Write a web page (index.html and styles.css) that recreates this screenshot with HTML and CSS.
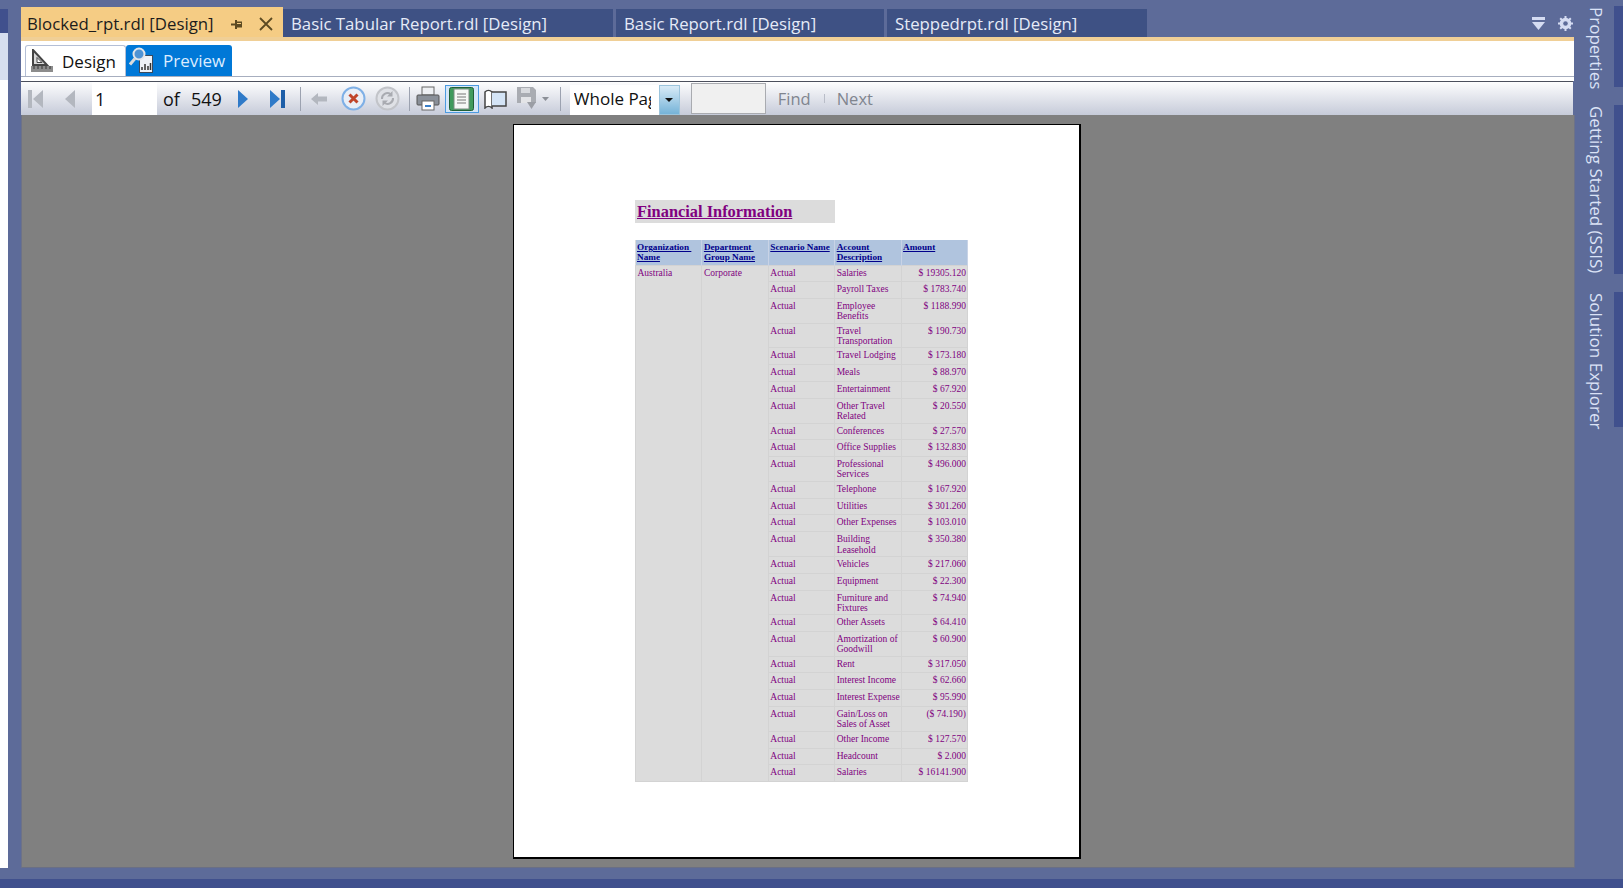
FILE: index.html
```html
<!DOCTYPE html>
<html lang="en">
<head>
    <meta charset="UTF-8">
    <title>Blocked_rpt.rdl [Design]</title>
    <link rel="stylesheet" href="styles.css">
</head>
<body>
    <div class="shell">
        <!-- Left edge of the neighbouring tool window -->
        <div class="left-strip">
            <div class="strip-head"></div>
            <div class="strip-pale"></div>
            <div class="strip-body"></div>
        </div>

        <div class="doc">
            <!-- Document tabs -->
            <div class="tabs">
                <div class="tab tab-active">
                    <span>Blocked_rpt.rdl [Design]</span>
                    <svg class="tab-pin" width="13" height="11" viewBox="0 0 13 11"><path d="M0 4.500h4v2H0z" fill="#5c4a22"/><path d="M4 1h2v1.500h5v6H6V10H4z" fill="#5c4a22"/><path d="M6 4h4v1H6z" fill="#f5cc84"/></svg>
                    <svg class="tab-close" width="14" height="14" viewBox="0 0 14 14"><path d="M1 1l12 12M13 1L1 13" fill="none" stroke="#5c4a22" stroke-width="1.800"/></svg>
                </div>
                <div class="tab tab-b">Basic Tabular Report.rdl [Design]</div>
                <div class="tab tab-c">Basic Report.rdl [Design]</div>
                <div class="tab tab-d">Steppedrpt.rdl [Design]</div>
                <div class="tab-tools">
                    <svg width="13" height="13" viewBox="0 0 13 13"><path d="M0 0h13v3H0zM0 5h13l-6.500 8z" fill="#d5dcf2"/></svg>
                    <svg width="15" height="15" viewBox="0 0 15 15"><circle cx="7.500" cy="7.500" r="4.300" fill="none" stroke="#d5dcf2" stroke-width="3"/><path d="M7.500 0v15M0 7.500h15M2.200 2.200l10.600 10.600M12.800 2.200L2.200 12.800" stroke="#d5dcf2" stroke-width="2"/><circle cx="7.500" cy="7.500" r="2.300" fill="#5d6b99"/></svg>
                </div>
            </div>
            <div class="tab-rule"></div>

            <!-- Design / Preview -->
            <div class="view-tabs">
                <div class="view-tab view-design">
                    <svg width="22" height="24" viewBox="0 0 22 24"><path d="M2 1l14 15H2z" fill="#d9d9d9" stroke="#444" stroke-width="2"/><path d="M6 8.500l5 5H6z" fill="#fff" stroke="#444"/><rect x="0" y="17" width="22" height="6" fill="#8c8c8c"/><path d="M3 17v3M7 17v3M11 17v3M15 17v3M19 17v3" stroke="#333"/></svg>
                    <span>Design</span>
                </div>
                <div class="view-tab view-preview">
                    <svg width="25" height="27" viewBox="0 0 25 27"><rect x="10.500" y="8.500" width="13" height="17" fill="#eef2f8" stroke="#3b4a5c"/><path d="M13 23v-3M16 23v-6M19 23v-4M21.500 23v-7" stroke="#333" stroke-width="1.500"/><circle cx="10" cy="7" r="5.500" fill="#4f93d4" stroke="#e4e6ea" stroke-width="2"/><path d="M6 11.500l-5 6" stroke="#dcdcdc" stroke-width="3"/></svg>
                    <span>Preview</span>
                </div>
            </div>
            <div class="view-gap"></div>

            <!-- Report viewer toolbar -->
            <div class="toolbar">
                <svg class="tb-first" width="16" height="20" viewBox="0 0 16 20"><path d="M0 1h4v18H0zM15 1v18L5 10z" fill="#b3b7bf"/></svg>
                <svg class="tb-prev" width="11" height="20" viewBox="0 0 11 20"><path d="M10 1v18L0 10z" fill="#b3b7bf"/></svg>
                <div class="page-input">1</div>
                <span class="tb-of">of</span>
                <span class="tb-count">549</span>
                <svg class="tb-next" width="10" height="20" viewBox="0 0 10 20"><path d="M0 1v18l10-9z" fill="#2f7ac8"/></svg>
                <svg class="tb-last" width="16" height="20" viewBox="0 0 16 20"><path d="M0 1v18l10-9z" fill="#2f7ac8"/><path d="M11 1h4v18h-4z" fill="#1d5ea8"/></svg>
                <div class="tb-sep sep-a"></div>
                <svg class="tb-back" width="16" height="12" viewBox="0 0 16 12"><path d="M0 6l7-6v3.500h9v5H7V12z" fill="#b3b7bf"/></svg>
                <svg class="tb-stop" width="25" height="25" viewBox="0 0 25 25"><circle cx="12.500" cy="12.500" r="11" fill="#e9eef6" stroke="#7fb0e6" stroke-width="2"/><path d="M8.500 8.500l8 8M16.500 8.500l-8 8" stroke="#c0452a" stroke-width="3"/></svg>
                <svg class="tb-refresh" width="25" height="25" viewBox="0 0 25 25"><circle cx="12.500" cy="12.500" r="11" fill="#dfe1e6" stroke="#c2c4c9" stroke-width="2"/><path d="M7 13a5.500 5.500 0 0 1 8.500-5M18 12a5.500 5.500 0 0 1-8.500 5" fill="none" stroke="#a9abb1" stroke-width="2"/><path d="M17.500 5v5.500H12zM7.500 20v-5.500H13z" fill="#a9abb1"/></svg>
                <div class="tb-sep sep-b"></div>
                <svg class="tb-print" width="24" height="25" viewBox="0 0 24 25"><rect x="6" y="1" width="12" height="8" fill="#eef0f3" stroke="#666"/><rect x="1" y="9" width="22" height="10" rx="1" fill="#8a9099" stroke="#555"/><rect x="6" y="15" width="12" height="9" fill="#fff" stroke="#666"/><path d="M9 20h6" stroke="#3a7fc8" stroke-width="2"/></svg>
                <div class="tb-layout">
                    <svg width="25" height="24" viewBox="0 0 25 24"><rect x="0.500" y="0.500" width="24" height="23" rx="2" fill="#3f9a5c" stroke="#1f5f36"/><rect x="5" y="2" width="15" height="20" fill="#f6f8f6" stroke="#7a8a80"/><path d="M8 7h9M8 10h9M8 13h9M8 16h9" stroke="#777"/></svg>
                </div>
                <svg class="tb-book" width="23" height="20" viewBox="0 0 23 20"><path d="M1 3c2-2 5-2 7 0v16c-2-2-5-2-7 0z" fill="#fff" stroke="#444" stroke-width="1.500"/><path d="M8 3h14v14H8" fill="#d4e4f6" stroke="#444" stroke-width="1.500"/></svg>
                <svg class="tb-save" width="20" height="23" viewBox="0 0 20 23"><path d="M0 0h16l3 3v13H0z" fill="#a9acb2"/><rect x="4" y="1" width="9" height="5" fill="#d8dade"/><rect x="4" y="10" width="10" height="6" fill="#e3e4e7"/><path d="M10 15h9l-4.500 7z" fill="#9b9ea5"/></svg>
                <svg class="tb-caret" width="7" height="4" viewBox="0 0 7 4"><path d="M0 0h7L3.500 4z" fill="#8b8f97"/></svg>
                <div class="tb-sep sep-c"></div>
                <div class="zoom-box">
                    <div class="zoom-value">Whole Page</div>
                    <div class="zoom-arrow"><svg width="8" height="4" viewBox="0 0 8 4"><path d="M0 0h8L4 4z" fill="#111"/></svg></div>
                </div>
                <div class="find-input"></div>
                <span class="tb-find">Find</span>
                <div class="tb-sep sep-d"></div>
                <span class="tb-nextlabel">Next</span>
            </div>

            <!-- Report surface -->
            <div class="surface">
                <div class="page">
                    <div class="report-title"><u>Financial Information</u></div>
                    <table class="report">
                        <thead>
                            <tr>
                                <th>Organization&nbsp; Name</th>
                                <th>Department&nbsp; Group Name</th>
                                <th>Scenario Name</th>
                                <th>Account&nbsp; Description</th>
                                <th>Amount</th>
                            </tr>
                        </thead>
                        <tbody>
                            <tr><td class="merged" rowspan="27">Australia</td><td class="merged" rowspan="27">Corporate</td><td>Actual</td><td>Salaries</td><td class="amt">$ 19305.120</td></tr>
                            <tr><td>Actual</td><td>Payroll Taxes</td><td class="amt">$ 1783.740</td></tr>
                            <tr class="two"><td>Actual</td><td>Employee Benefits</td><td class="amt">$ 1188.990</td></tr>
                            <tr class="two"><td>Actual</td><td>Travel Transportation</td><td class="amt">$ 190.730</td></tr>
                            <tr><td>Actual</td><td>Travel Lodging</td><td class="amt">$ 173.180</td></tr>
                            <tr><td>Actual</td><td>Meals</td><td class="amt">$ 88.970</td></tr>
                            <tr><td>Actual</td><td>Entertainment</td><td class="amt">$ 67.920</td></tr>
                            <tr class="two"><td>Actual</td><td>Other Travel Related</td><td class="amt">$ 20.550</td></tr>
                            <tr><td>Actual</td><td>Conferences</td><td class="amt">$ 27.570</td></tr>
                            <tr><td>Actual</td><td>Office Supplies</td><td class="amt">$ 132.830</td></tr>
                            <tr class="two"><td>Actual</td><td>Professional Services</td><td class="amt">$ 496.000</td></tr>
                            <tr><td>Actual</td><td>Telephone</td><td class="amt">$ 167.920</td></tr>
                            <tr><td>Actual</td><td>Utilities</td><td class="amt">$ 301.260</td></tr>
                            <tr><td>Actual</td><td>Other Expenses</td><td class="amt">$ 103.010</td></tr>
                            <tr class="two"><td>Actual</td><td>Building Leasehold</td><td class="amt">$ 350.380</td></tr>
                            <tr><td>Actual</td><td>Vehicles</td><td class="amt">$ 217.060</td></tr>
                            <tr><td>Actual</td><td>Equipment</td><td class="amt">$ 22.300</td></tr>
                            <tr class="two"><td>Actual</td><td>Furniture and Fixtures</td><td class="amt">$ 74.940</td></tr>
                            <tr><td>Actual</td><td>Other Assets</td><td class="amt">$ 64.410</td></tr>
                            <tr class="two"><td>Actual</td><td>Amortization of Goodwill</td><td class="amt">$ 60.900</td></tr>
                            <tr><td>Actual</td><td>Rent</td><td class="amt">$ 317.050</td></tr>
                            <tr><td>Actual</td><td>Interest Income</td><td class="amt">$ 62.660</td></tr>
                            <tr><td>Actual</td><td>Interest Expense</td><td class="amt">$ 95.990</td></tr>
                            <tr class="two"><td>Actual</td><td>Gain/Loss on Sales of Asset</td><td class="amt">($ 74.190)</td></tr>
                            <tr><td>Actual</td><td>Other Income</td><td class="amt">$ 127.570</td></tr>
                            <tr><td>Actual</td><td>Headcount</td><td class="amt">$ 2.000</td></tr>
                            <tr><td>Actual</td><td>Salaries</td><td class="amt">$ 16141.900</td></tr>
                        </tbody>
                    </table>
                </div>
            </div>
        </div>

        <!-- Auto-hidden tool windows -->
        <div class="rail">
            <div class="rail-tab rail-properties"><span>Properties</span></div>
            <div class="rail-tab rail-started"><span>Getting Started (SSIS)</span></div>
            <div class="rail-tab rail-solution"><span>Solution Explorer</span></div>
        </div>
    </div>
    <div class="status"></div>
</body>
</html>
```

FILE: styles.css
```css
body {
    margin: 0;
    height: 888px;
    overflow: hidden;
    background: #5d6b99;
    font-family: "Open Sans", "Noto Sans", sans-serif;
    color: #111;
}
.shell {
    display: flex;
    height: 879px;
}
.status {
    height: 9px;
    background: #40508d;
}

/* left strip */
.left-strip {
    width: 8px;
    margin-right: 13px;
    padding-top: 9px;
    height: 859px;
    display: flex;
    flex-direction: column;
}
.strip-head {
    height: 24px;
    background: #40508d;
}
.strip-pale {
    height: 47px;
    background: #d6deef;
}
.strip-body {
    flex: 1;
    background: #fff;
}

/* document */
.doc {
    width: 1553px;
    height: 868px;
    display: flex;
    flex-direction: column;
}
.tabs {
    height: 37px;
    padding-top: 7px;
    box-sizing: border-box;
    display: flex;
    align-items: flex-end;
    font-size: 16.800px;
}
.tab {
    height: 28px;
    line-height: 30px;
    box-sizing: border-box;
    padding-left: 8px;
    background: #3e5184;
    color: #e6ebf8;
    white-space: nowrap;
    margin-right: 3px;
}
.tab-active {
    width: 262px;
    height: 30px;
    padding-left: 6px;
    margin-right: 0;
    background: #f5cc84;
    color: #1c1c1c;
    display: flex;
    align-items: center;
}
.tab-active span {
    margin-top: 4px;
}
.tab-pin {
    margin-left: 17px;
    margin-top: 4px;
}
.tab-close {
    margin-left: 15px;
    margin-top: 4px;
}
.tab-b {
    width: 330px;
}
.tab-c {
    width: 268px;
}
.tab-d {
    width: 260px;
}
.tab-tools {
    margin-left: auto;
    margin-right: 1px;
    align-self: flex-start;
    padding-top: 9px;
    display: flex;
    align-items: center;
    gap: 13px;
}
.tab-rule {
    height: 4px;
    background: #f0cf96;
}

.view-tabs {
    height: 36px;
    box-sizing: border-box;
    padding: 4px 0 0 4px;
    background: #fff;
    border-bottom: 1px solid #a7aebf;
    display: flex;
    font-size: 17px;
}
.view-tab {
    display: flex;
    align-items: center;
    box-sizing: border-box;
    height: 31px;
    border-radius: 3px 3px 0 0;
}
.view-design {
    width: 101px;
    padding-left: 5px;
    gap: 9px;
    border: 1px solid #b4bfd6;
    border-bottom: none;
}
.view-preview {
    width: 106px;
    padding-left: 3px;
    gap: 9px;
    background: #0078d7;
    color: #dcecff;
}
.view-gap {
    height: 4px;
    background: #fff;
}

/* toolbar */
.toolbar {
    height: 34px;
    box-sizing: border-box;
    margin-right: 1px;
    border-top: 1px solid #4b4f5c;
    background: linear-gradient(#fdfdfe, #c6cbd9);
    display: flex;
    align-items: center;
    font-size: 18px;
}
.tb-first {
    margin-left: 7px;
}
.tb-prev {
    margin-left: 21px;
}
.page-input {
    width: 65px;
    height: 33px;
    margin-left: 16px;
    padding: 5px 0 0 3px;
    box-sizing: border-box;
    background: #fff;
}
.tb-of {
    margin-left: 6px;
}
.tb-count {
    margin-left: 11px;
}
.tb-next {
    margin-left: 16px;
}
.tb-last {
    margin-left: 22px;
}
.tb-sep {
    width: 1px;
    height: 24px;
    background: #9ca2b0;
}
.sep-a {
    margin-left: 14px;
}
.tb-back {
    margin-left: 10px;
}
.tb-stop {
    margin-left: 14px;
}
.tb-refresh {
    margin-left: 9px;
}
.sep-b {
    margin-left: 9px;
}
.tb-print {
    margin-left: 6px;
}
.tb-layout {
    width: 34px;
    height: 28px;
    margin-left: 5px;
    box-sizing: border-box;
    border: 1px solid #4c9be0;
    background: #d4e6f8;
    display: flex;
    align-items: center;
    justify-content: center;
}
.tb-book {
    margin-left: 5px;
}
.tb-save {
    margin-left: 10px;
}
.tb-caret {
    margin-left: 5px;
}
.sep-c {
    margin-left: 11px;
}
.zoom-box {
    width: 110px;
    height: 30px;
    margin-left: 9px;
    display: flex;
    align-self: flex-end;
    background: #fff;
}
.zoom-value {
    width: 77px;
    margin-left: 4px;
    margin-right: 8px;
    font-size: 17px;
    line-height: 28px;
    overflow: hidden;
    white-space: nowrap;
}
.zoom-arrow {
    width: 21px;
    display: flex;
    align-items: center;
    justify-content: center;
    background: linear-gradient(#d9ebf7, #75b3d8);
    border: 1px solid #9cc4dc;
    box-sizing: border-box;
}
.find-input {
    width: 75px;
    height: 31px;
    margin-left: 11px;
    box-sizing: border-box;
    border: 1px solid #a9abb0;
    background: #f0f0f0;
}
.tb-find,
.tb-nextlabel {
    color: #80858f;
    font-size: 16.500px;
}
.tb-find {
    margin-left: 12px;
}
.sep-d {
    height: 9px;
    margin-left: 13px;
    background: #b9bdc8;
}
.tb-nextlabel {
    margin-left: 12px;
}

/* report surface */
.surface {
    flex: 1;
    margin-right: -1px;
    background: #808080;
    border-left: 1px solid #6d7288;
    border-right: 1px solid #6d7288;
    border-bottom: 1px solid #6a6f85;
    padding-top: 9px;
}
.page {
    width: 568px;
    height: 735px;
    box-sizing: border-box;
    margin-left: 491px;
    padding: 75px 0 0 121px;
    background: #fff;
    border: 1px solid #000;
    border-width: 1px 2px 2px 1px;
    font-family: "Liberation Serif", serif;
    color: #800080;
}
.report-title {
    width: 200px;
    height: 23px;
    padding-left: 2px;
    box-sizing: border-box;
    background: #dcdcdc;
    font-size: 16.400px;
    font-weight: bold;
    line-height: 23px;
    margin-bottom: 17px;
}
.report {
    width: 333px;
    border-collapse: collapse;
    table-layout: fixed;
    background: #dcdcdc;
    font-size: 9.500px;
    line-height: 10.300px;
}
.report th {
    height: 25px;
    padding: 2px 0 0 1.500px;
    box-sizing: border-box;
    background: #b0c4de;
    color: #00008b;
    text-align: left;
    vertical-align: top;
    text-decoration: underline;
    font-size: 9.200px;
    border-right: 1px solid #c8d3e6;
}
.report td {
    height: 16.800px;
    padding: 2px 0 0 1.500px;
    box-sizing: border-box;
    vertical-align: top;
    border: 1px solid #d3d3d3;
}
.report tr.two td {
    height: 24.700px;
}
.report td.amt {
    padding-right: 1px;
    text-align: right;
}

/* right rail */
.rail {
    flex: 1;
    padding-top: 6px;
    display: flex;
    flex-direction: column;
    gap: 18px;
    font-size: 17px;
    color: #dbe2f6;
}
.rail-tab {
    border-right: 9px solid #40508d;
    box-sizing: border-box;
    display: flex;
    justify-content: flex-end;
}
.rail-properties {
    height: 81px;
}
.rail-tab span {
    writing-mode: vertical-rl;
    margin-right: 6px;
    padding-top: 1px;
    white-space: nowrap;
}
.rail-started {
    height: 169px;
}
.rail-solution {
    height: 135px;
}
```
